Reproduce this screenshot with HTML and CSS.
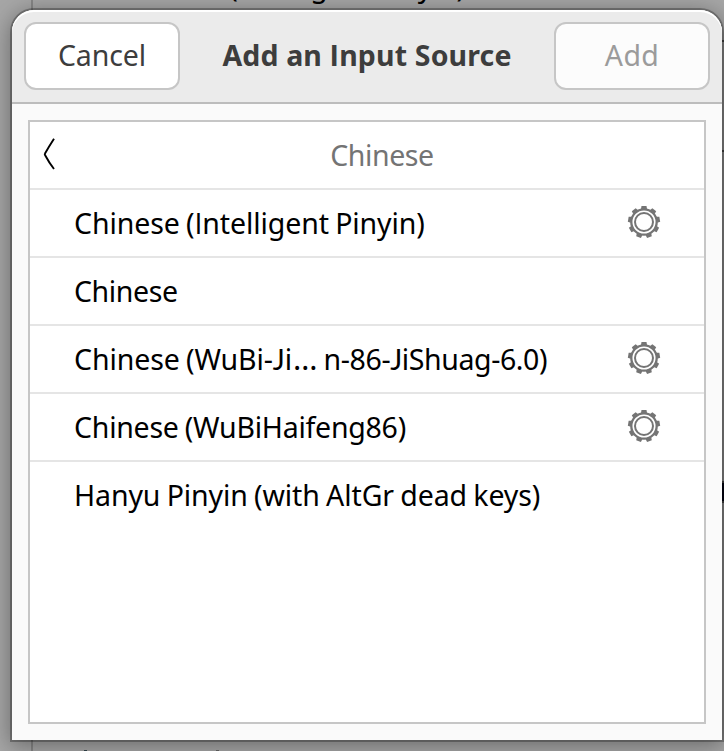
FILE: index.html
```html
<!DOCTYPE html>
<html lang="en">
<head>
<meta charset="utf-8">
<title>Add an Input Source</title>
<link rel="stylesheet" href="styles.css">
</head>
<body>
<svg class="defs" width="0" height="0" aria-hidden="true">
  <symbol id="gear" viewBox="-17 -17 34 34">
    <g fill="none" stroke="#747474">
      <circle r="12.7" stroke-width="2.3"/>
      <circle r="9" stroke-width="2"/>
    </g>
    <g fill="#747474">
      <path id="tooth" d="M-3-13l.5-3h5l.5 3z"/>
      <use href="#tooth" transform="rotate(40)"/>
      <use href="#tooth" transform="rotate(80)"/>
      <use href="#tooth" transform="rotate(120)"/>
      <use href="#tooth" transform="rotate(160)"/>
      <use href="#tooth" transform="rotate(200)"/>
      <use href="#tooth" transform="rotate(240)"/>
      <use href="#tooth" transform="rotate(280)"/>
      <use href="#tooth" transform="rotate(320)"/>
    </g>
  </symbol>
</svg>
<div class="backdrop" aria-hidden="true">
  <div class="behind-line"></div>
  <div class="behind-text">Chinese (<span class="sans-i">I</span>ntelligent Pinyin)</div>
  <div class="behind-row first"></div>
  <div class="behind-row second"></div>
  <div class="behind-mark one"></div>
  <div class="behind-mark two"></div>
</div>
<main class="dialog">
  <header class="header">
    <button class="button"><span class="t-cancel">Cancel</span></button>
    <h1 class="title"><span class="t-title">Add an <span class="sans-i">I</span>nput Source</span></h1>
    <button class="button disabled" disabled><span class="t-add">Add</span></button>
  </header>
  <section class="content">
    <div class="list">
      <div class="row heading">
        <svg class="back" width="14" height="32" viewBox="0 0 14 32"><path d="M12 .8Q7 8.500 3 15.500Q2.500 16.300 3 17Q7 24.500 12 31" fill="none" stroke="#000" stroke-width="1.900"/></svg>
        <span class="t-heading">Chinese</span>
      </div>
      <div class="row"><span class="t-pinyin">Chinese (<span class="sans-i">I</span>ntelligent Pinyin)</span><svg class="gear"><use href="#gear"/></svg></div>
      <div class="row"><span class="t-chinese">Chinese</span></div>
      <div class="row"><span class="t-wubi">Chinese (WuBi-<span class="sans-j">J</span>i<span class="dots">…</span><span class="tail">n-86-<span class="sans-j">J</span>iShuag-6.0)</span></span><svg class="gear"><use href="#gear"/></svg></div>
      <div class="row"><span class="t-haifeng">Chinese (WuBiHaifeng86)</span><svg class="gear"><use href="#gear"/></svg></div>
      <div class="row"><span class="t-hanyu">Hanyu Pinyin (with AltGr dead keys)</span></div>
    </div>
  </section>
</main>
</body>
</html>
```
FILE: styles.css
```css
* { box-sizing: border-box; }

body {
  margin: 0;
  width: 724px;
  height: 751px;
  overflow: hidden;
  position: relative;
  background: #a6a6a6;
  color: #000;
  font: 28.5px/40px "Noto Sans", sans-serif;
}

.defs { position: absolute; }

.sans-i { font-family: "Open Sans", sans-serif; }
.sans-j { font-family: Lato, sans-serif; line-height: 1; }

.backdrop {
  position: absolute;
  inset: 0;
  overflow: hidden;
}

.behind-line {
  position: absolute;
  left: 31px;
  top: 0;
  width: 2px;
  height: 751px;
  background: #868686;
}

.behind-text {
  position: absolute;
  left: 119px;
  top: -34px;
  white-space: nowrap;
  letter-spacing: -0.2px;
  word-spacing: -2px;
}

.behind-row {
  position: absolute;
  right: 0;
  width: 2px;
  border: solid #505050;
  border-width: 2px 0;
}

.behind-row.first { top: 40px; height: 112px; }
.behind-row.second { top: 481px; height: 22px; background: #000314; }

.behind-mark {
  position: absolute;
  top: 750px;
  width: 3px;
  height: 1px;
  background: #33444b;
}

.behind-mark.one { left: 84px; }
.behind-mark.two { left: 216px; background: #666; }

.dialog {
  position: relative;
  display: flex;
  flex-direction: column;
  width: 710px;
  height: 730px;
  margin: 10px 0 0 12px;
  border-radius: 22px 22px 0 0;
  background: #fafafa;
  box-shadow: 0 0 0 2px rgba(0, 0, 0, .27), 0 4px 22px 2px rgba(0, 0, 0, .36);
}

.header {
  display: flex;
  justify-content: space-between;
  height: 94px;
  padding: 12px;
  border-bottom: 2px solid #bcbcbc;
  border-radius: 22px 22px 0 0;
  background: #ebebeb;
  box-shadow: inset 0 2px #fff;
}

.button {
  width: 156px;
  height: 68px;
  padding: 0 0 2px;
  border: 2px solid #c6c6c6;
  border-radius: 12px;
  background: #fff;
  color: #3d3d3d;
  font: inherit;
}

.button.disabled { background: #fcfcfc; color: #9b9b9b; }

.title {
  margin: 0;
  padding-top: 13px;
  color: #3d3d3d;
  font: 700 28.5px/40px "Noto Sans", sans-serif;
  white-space: nowrap;
}

.content { flex: 1; padding: 16px; }

.list {
  height: 604px;
  border: 2px solid #c6c6c6;
  background: #fff;
}

.row {
  display: flex;
  align-items: center;
  justify-content: space-between;
  height: 68px;
  padding: 0 43px 0 44px;
  border-bottom: 2px solid #e5e5e5;
  white-space: nowrap;
  word-spacing: -1px;
}

.row:last-child { border-color: transparent; }

.heading {
  justify-content: center;
  padding: 0 0 0 30px;
  color: #747474;
  position: relative;
}

.back { position: absolute; left: 12px; top: 16px; }

.gear { width: 34px; height: 34px; margin-bottom: 2px; }

.t-cancel { letter-spacing: -0.1px; }
.t-title { letter-spacing: 0.15px; }
.t-add { letter-spacing: 0.4px; }
.t-heading, .t-chinese { letter-spacing: -0.4px; }
.t-pinyin { letter-spacing: -0.1px; }
.t-wubi { letter-spacing: -0.1px; }
.t-haifeng { letter-spacing: -0.25px; }
.t-hanyu { letter-spacing: -0.1px; }
.dots { font-size: 31px; line-height: 1; letter-spacing: 6px; margin-left: 1px; }
.tail { letter-spacing: -0.4px; }
```
